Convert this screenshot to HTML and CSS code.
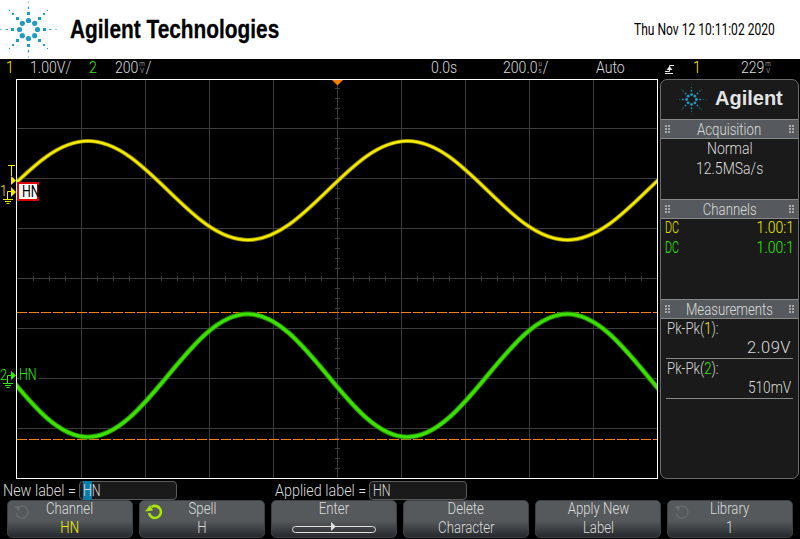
FILE: index.html
```html
<!DOCTYPE html>
<html lang="en">
<head>
    <meta charset="UTF-8">
    <title>Agilent Technologies</title>
    <link rel="stylesheet" href="styles.css">
</head>
<body>
    <svg width="0" height="0" class="defs">
        <defs>
            <g id="spark" fill="#1f9cc0">
                <circle cx="0" cy="-9" r="2.6"/><circle cx="6.2" cy="-6.2" r="2.6"/><circle cx="9" cy="0" r="2.6"/><circle cx="6.2" cy="6.2" r="2.6"/>
                <circle cx="0" cy="9" r="2.6"/><circle cx="-6.2" cy="6.2" r="2.6"/><circle cx="-9" cy="0" r="2.6"/><circle cx="-6.2" cy="-6.2" r="2.6"/>
                <path d="M-1.5 -17.5h3v3h-3zM-1.5 14.5h3v3h-3zM-17.5 -1.5h3v3h-3zM14.5 -1.5h3v3h-3z"/>
                <path d="M-12.5 -12.5h3v3h-3zM9.5 -12.5h3v3h-3zM-12.5 9.5h3v3h-3zM9.5 9.5h3v3h-3z"/>
                <path d="M-16.5 -16.5h2v2h-2zM14.5 -16.5h2v2h-2zM-16.5 14.5h2v2h-2zM14.5 14.5h2v2h-2z"/>
                <path d="M-.6 -23h1.2v2.4h-1.2zM-.6 20.6h1.2v2.4h-1.2zM-23 -.6h2.4v1.2h-2.4zM20.6 -.6h2.4v1.2h-2.4z"/>
                <path d="M-.5 -28h1v1h-1zM-.5 27h1v1h-1zM-28 -.5h1v1h-1zM27 -.5h1v1h-1z"/>
                <path d="M-19.5 -19.5h1v1h-1zM18.5 -19.5h1v1h-1zM-19.5 18.5h1v1h-1zM18.5 18.5h1v1h-1z"/>
            </g>
            <path id="trace-1" d="M-71.75 240C-13.6 240 29.8 141 88 141C146.2 141 189.8 240 247.75 240C305.9 240 349.5 141 407.5 141C465.7 141 509.3 240 567.25 240C625.4 240 669 141 727 141"/>
            <path id="trace-2" d="M-71.75 314C-13.6 314 29.8 437 88 437C146.2 437 189.8 314 247.75 314C305.9 314 349.5 437 407.5 437C465.7 437 509.3 314 567.25 314C625.4 314 669 437 727 437"/>
        </defs>
    </svg>

    <header class="header">
        <svg class="logo" width="57" height="57" viewBox="-28.5 -28.5 57 57"><use href="#spark"/></svg>
        <span class="brand">Agilent Technologies</span>
        <span class="clock">Thu Nov 12 10:11:02 2020</span>
    </header>

    <div class="status">
        <span class="st st-ch1 yellow">1</span>
        <span class="st st-v1">1.00V/</span>
        <span class="st st-ch2 green">2</span>
        <span class="st st-v2">200<small class="unit"><i>m</i><i>V</i></small>/</span>
        <span class="st st-pos">0.0s</span>
        <span class="st st-time">200.0<small class="unit"><i>u</i><i>s</i></small>/</span>
        <span class="st st-auto">Auto</span>
        <svg class="st-edge" width="10" height="10" viewBox="0 0 10 10"><path d="M0 7.5H4.5V1.5H9" fill="none" stroke="#e8e8e8"/><path d="M1.5 6L4.5 2L7.5 6Z M0 9h8v1H0Z" fill="#e8e8e8"/></svg>
        <span class="st st-trigch yellow">1</span>
        <span class="st st-trig">229<small class="unit"><i>m</i><i>V</i></small></span>
    </div>

    <main class="middle">
        <section class="screen">
            <svg class="plot" width="640" height="398" viewBox="17 80 640 398">
                <g stroke="#3c3c3c" fill="none">
                    <path d="M81.5 80V478M145.5 80V478M209.5 80V478M273.5 80V478M337.5 80V478M401.5 80V478M465.5 80V478M529.5 80V478M593.5 80V478"/>
                    <path d="M17 128.5H657M17 178.5H657M17 228.5H657M17 278.5H657M17 328.5H657M17 378.5H657M17 428.5H657"/>
                    <path d="M335 88.5h5M335 98.5h5M335 108.5h5M335 118.5h5M335 138.5h5M335 148.5h5M335 158.5h5M335 168.5h5M335 188.5h5M335 198.5h5M335 208.5h5M335 218.5h5M335 238.5h5M335 248.5h5M335 258.5h5M335 268.5h5M335 288.5h5M335 298.5h5M335 308.5h5M335 318.5h5M335 338.5h5M335 348.5h5M335 358.5h5M335 368.5h5M335 388.5h5M335 398.5h5M335 408.5h5M335 418.5h5M335 438.5h5M335 448.5h5M335 458.5h5M335 468.5h5"/>
                    <path d="M33.5 276v5M49.5 276v5M65.5 276v5M97.5 276v5M113.5 276v5M129.5 276v5M161.5 276v5M177.5 276v5M193.5 276v5M225.5 276v5M241.5 276v5M257.5 276v5M289.5 276v5M305.5 276v5M321.5 276v5M353.5 276v5M369.5 276v5M385.5 276v5M417.5 276v5M433.5 276v5M449.5 276v5M481.5 276v5M497.5 276v5M513.5 276v5M545.5 276v5M561.5 276v5M577.5 276v5M609.5 276v5M625.5 276v5M641.5 276v5"/>
                </g>
                <path d="M17 439.5H657" stroke="#f58000" stroke-dasharray="10 2" fill="none"/>
                <path d="M17 312.5H657" stroke="#f58000" stroke-dasharray="10 2" fill="none"/>
                <use href="#trace-1" class="wave-1-edge"/>
                <use href="#trace-1" class="wave-1"/>
                <use href="#trace-2" class="wave-2-edge"/>
                <use href="#trace-2" class="wave-2"/>
                <path d="M332 80H343L337.5 85.5Z" fill="#f58000"/>
            </svg>
        </section>

        <aside class="panel">
            <div class="panel-logo">
                <svg width="31" height="31" viewBox="-28.5 -28.5 57 57"><use href="#spark"/></svg>
                <span>Agilent</span>
            </div>
            <h2 class="panel-head"><span>Acquisition</span></h2>
            <div class="acq">
                <div><span>Normal</span></div>
                <div><span>12.5MSa/s</span></div>
            </div>
            <h2 class="panel-head"><span>Channels</span></h2>
            <div class="channels">
                <div class="chan yellow"><span class="dc">DC</span><span class="ratio">1.00:1</span></div>
                <div class="chan green"><span class="dc">DC</span><span class="ratio">1.00:1</span></div>
            </div>
            <h2 class="panel-head"><span>Measurements</span></h2>
            <div class="meas">
                <div class="meas-name"><span>Pk-Pk(<b class="yellow">1</b>):</span></div>
                <div class="meas-val"><span class="wide">2.09V</span></div>
                <div class="meas-name"><span>Pk-Pk(<b class="green">2</b>):</span></div>
                <div class="meas-val"><span class="tight">510mV</span></div>
            </div>
        </aside>

        <!-- channel markers sit over the left edge of the graticule -->
        <svg class="marker" width="17" height="42" viewBox="0 0 17 42">
            <g fill="none" stroke="#f2ea00">
                <path d="M8 1.5H15M11.5 1.5V12"/>
                <path d="M7.5 35V27.5H11.5M3 35.5H13M5 37.5H11M6.5 39.5H9.5"/>
            </g>
            <path d="M11 12V21L16 16.5Z M11 23V33L16 28Z" fill="#f2ea00"/>
        </svg>
        <span class="chnum chnum-1 yellow">1</span>
        <span class="tag"><span>HN</span></span>

        <svg class="marker marker-2" width="17" height="20" viewBox="0 0 17 20">
            <g fill="none" stroke="#30f000">
                <path d="M7.5 13V5.5H11.5M3 13.5H13M5 15.5H11M6.5 17.5H9.5"/>
            </g>
            <path d="M11 1V10L16 5.5Z" fill="#30f000"/>
        </svg>
        <span class="chnum chnum-2 green">2</span>
        <span class="tag-2 green"><span>HN</span></span>
    </main>

    <div class="label-row">
        <span class="lbl">New label =</span>
        <span class="box"><span><b class="cursor">H</b>N</span></span>
        <span class="lbl lbl-applied">Applied label =</span>
        <span class="box"><span>HN</span></span>
    </div>

    <nav class="softkeys">
        <div class="key">
            <svg class="knob" width="18" height="16" viewBox="0 0 18 16"><path d="M5 3.5A6 6 0 1 1 3 9" fill="none" stroke="#6a6e72" stroke-width="1.2"/><path d="M1.5 2.5L7 2L6 7Z" fill="#6a6e72"/></svg>
            <span>Channel</span><span class="yellow">HN</span>
        </div>
        <div class="key">
            <svg class="knob" width="18" height="16" viewBox="0 0 18 16"><path d="M6.5 3A6 6 0 1 1 4 9" fill="none" stroke="#a8e600" stroke-width="2.6"/><path d="M0 7.5L8 6.5L5 1Z" fill="#a8e600"/></svg>
            <span>Spell</span><span>H</span>
        </div>
        <div class="key">
            <span>Enter</span>
            <svg width="84" height="12" viewBox="0 0 84 12"><rect x=".5" y="5.5" width="83" height="6" rx="3" fill="none" stroke="#e0e0e0"/><path d="M39 1V10L44 5.5Z" fill="#e0e0e0"/></svg>
        </div>
        <div class="key"><span>Delete</span><span>Character</span></div>
        <div class="key"><span>Apply New</span><span>Label</span></div>
        <div class="key">
            <svg class="knob" width="18" height="16" viewBox="0 0 18 16"><path d="M5 3.5A6 6 0 1 1 3 9" fill="none" stroke="#6a6e72" stroke-width="1.2"/><path d="M1.5 2.5L7 2L6 7Z" fill="#6a6e72"/></svg>
            <span>Library</span><span>1</span>
        </div>
    </nav>
</body>
</html>
```

FILE: styles.css
```css
* {
    box-sizing: border-box;
}

body {
    margin: 0;
    width: 800px;
    height: 539px;
    overflow: hidden;
    background-color: #000;
    color: #dcdcdc;
    font-family: Roboto, "Liberation Sans", sans-serif;
    font-weight: 300;
    font-size: 16.5px;
    white-space: nowrap;
}

.yellow { color: #f5f000; }
.green { color: #30f000; }

b {
    font-weight: inherit;
}

.defs {
    display: block;
    height: 0;
}

/* header */
.header {
    height: 59px;
    background-color: #fff;
    display: flex;
    align-items: center;
    color: #000;
}

.logo {
    flex: none;
}

.brand {
    margin-left: 13px;
    font-family: "Liberation Sans", sans-serif;
    font-weight: bold;
    font-size: 25px;
    -webkit-text-stroke: 0.3px #000;
    transform: scaleX(0.834);
    transform-origin: left;
}

.clock {
    margin-left: auto;
    margin-right: 25px;
    transform: scaleX(0.73);
    transform-origin: right;
    font-weight: 400;
}

/* status bar */
.status {
    height: 20px;
    position: relative;
    font-size: 16px;
}

.st {
    position: absolute;
    top: 0;
    line-height: 18px;
    transform: scaleX(0.88);
    transform-origin: left;
}

.unit {
    display: inline-flex;
    flex-direction: column;
    vertical-align: top;
    margin: 2px 1px 0;
    font-size: 7px;
    line-height: 7px;
    text-align: center;
}

.unit i {
    font-style: normal;
}

.st-ch1 { left: 6px; }
.st-v1 { left: 30px; }
.st-ch2 { left: 89px; }
.st-v2 { left: 115px; }
.st-pos { left: 431px; }
.st-time { left: 503px; }
.st-auto { left: 596px; }
.st-edge { position: absolute; left: 665px; top: 5px; }
.st-trigch { left: 693px; }
.st-trig { left: 741px; }

/* scope area */
.middle {
    position: relative;
    height: 400px;
    display: flex;
    padding-left: 16px;
}

.screen {
    width: 642px;
    height: 400px;
    border: 1px solid #fff;
    flex: none;
}

.plot {
    display: block;
}

.wave-1-edge,
.wave-1,
.wave-2-edge,
.wave-2 {
    fill: none;
}

.wave-1-edge {
    stroke: #8c8400;
    stroke-width: 4.2;
}

.wave-1 {
    stroke: #f5ec00;
    stroke-width: 2.4;
}

.wave-2-edge {
    stroke: #1f8a00;
    stroke-width: 5;
}

.wave-2 {
    stroke: #3ee000;
    stroke-width: 3.2;
}

/* side panel */
.panel {
    width: 139px;
    height: 400px;
    margin-left: 2px;
    background-color: #1a1a1a;
    border: 1px solid #6a6a6a;
    border-radius: 7px;
    display: flex;
    flex-direction: column;
    flex: none;
}

.panel-logo {
    height: 39px;
    display: flex;
    align-items: center;
    gap: 8px;
    padding-left: 15px;
    flex: none;
}

.panel-logo span {
    font-family: "Liberation Sans", sans-serif;
    font-weight: bold;
    font-size: 20px;
    color: #e4e4e4;
    margin-top: -2px;
}

.panel-head {
    margin: 0;
    height: 20px;
    flex: none;
    display: flex;
    justify-content: space-between;
    align-items: center;
    padding: 0 4px;
    background-color: #565a5e;
    border-top: 1px solid #888;
    border-bottom: 1px solid #888;
    font-weight: 300;
    font-size: 16.5px;
}

.panel-head::before,
.panel-head::after {
    content: "";
    width: 5px;
    height: 8px;
    background-image: radial-gradient(circle at 1px 1px, #a8a8a8 1px, transparent 1px);
    background-size: 3px 3px;
}

.panel-head span {
    transform: scaleX(0.8);
}

.acq {
    height: 60px;
    flex: none;
    text-align: center;
}

.acq div {
    height: 20px;
    line-height: 20px;
}

.acq span {
    display: inline-block;
    transform: scaleX(0.85);
}

.channels {
    height: 80px;
    flex: none;
    padding: 0 4px;
}

.chan {
    display: flex;
    justify-content: space-between;
    height: 20px;
    line-height: 18px;
}

.dc {
    transform: scaleX(0.65);
    transform-origin: left;
}

.ratio {
    transform: scaleX(0.85);
    transform-origin: right;
}

.meas {
    padding: 0 5px;
}

.meas-name {
    height: 20px;
    line-height: 20px;
    padding-left: 1px;
}

.meas-name span {
    display: inline-block;
    transform: scaleX(0.8);
    transform-origin: left;
}

.meas-val {
    height: 20px;
    line-height: 18px;
    text-align: right;
    border-bottom: 1px solid #888;
    padding-right: 2px;
}

.meas-val span {
    display: inline-block;
}

.meas-val .wide {
    letter-spacing: 0.5px;
}

.meas-val .tight {
    transform: scaleX(0.83);
    transform-origin: right;
}

/* labels drawn over the left edge of the graticule */
.marker {
    position: absolute;
    left: 0;
    top: 85px;
}

.marker-2 {
    top: 291px;
}

.chnum {
    position: absolute;
    left: 0;
    font-size: 15px;
    line-height: 16px;
    transform: scaleX(0.85);
    transform-origin: left;
}

.chnum-1 { top: 104px; }
.chnum-2 { top: 288px; }

.tag {
    position: absolute;
    left: 17px;
    top: 103px;
    width: 22px;
    height: 19px;
    background-color: #fff;
    border: 2px solid #e00000;
    color: #000;
    line-height: 15px;
    font-weight: 400;
    text-align: center;
}

.tag span {
    display: inline-block;
    transform: scaleX(0.75);
}

.tag-2 {
    position: absolute;
    left: 19px;
    top: 287px;
    width: 20px;
    background-color: #000;
    line-height: 18px;
}

.tag-2 span {
    display: inline-block;
    transform: scaleX(0.75);
    transform-origin: left;
}

/* label entry row */
.label-row {
    height: 21px;
    display: flex;
    align-items: center;
    padding-left: 3px;
    padding-top: 1px;
}

.lbl {
    width: 76px;
    flex: none;
    transform: scaleX(0.87);
    transform-origin: left;
}

.lbl-applied {
    width: 94px;
    margin-left: 98px;
}

.box {
    width: 98px;
    height: 19px;
    flex: none;
    background-color: #1a1a1a;
    border: 1px solid #5a5a5a;
    border-radius: 4px;
    padding-left: 3px;
    line-height: 17px;
}

.box span {
    display: inline-block;
    transform: scaleX(0.75);
    transform-origin: left;
}

.cursor {
    font-weight: inherit;
    background-color: #0a7aa8;
}

/* softkeys */
.softkeys {
    height: 39px;
    display: flex;
    gap: 6px;
    padding-left: 7px;
}

.key {
    position: relative;
    width: 126px;
    height: 38px;
    flex: none;
    border: 1px solid #3c4044;
    border-radius: 5px;
    background: linear-gradient(#55595c 0, #55595c 55%, #25282c 100%);
    display: flex;
    flex-direction: column;
    align-items: center;
    gap: 5px;
    padding-top: 1px;
    line-height: 14px;
}

.key span {
    transform: scaleX(0.8);
}

.knob {
    position: absolute;
    left: 5px;
    top: 3px;
}
```
